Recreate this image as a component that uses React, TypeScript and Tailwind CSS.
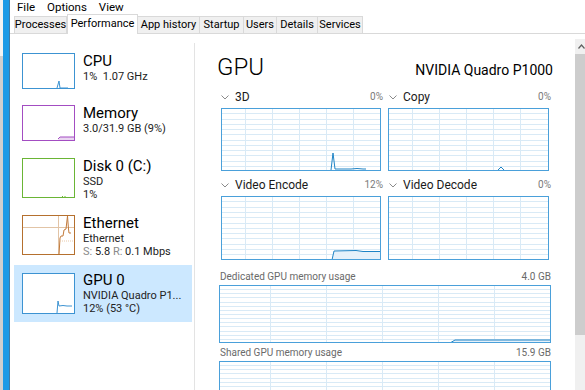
import React from "react";

type ChartProps = {
  w: number;
  h: number;
  cols: number[];
  rowH: number;
  line?: string;
  fill?: string;
};

// big graphs on the right side
function Chart({ w, h, cols, rowH, line, fill }: ChartProps) {
  const rows: number[] = [];
  for (let y = rowH; y < h - 2; y += rowH) rows.push(Math.round(y) + 0.5);
  return (
    <svg width={w} height={h} className="block">
      <rect x={0} y={0} width={w} height={h} fill="#ffffff" />
      {rows.map((y) => (
        <line key={"r" + y} x1={0} x2={w} y1={y} y2={y} stroke="#d9eaf6" />
      ))}
      {cols.map((x) => (
        <line key={"c" + x} x1={x + 0.5} x2={x + 0.5} y1={0} y2={h} stroke="#d9eaf6" />
      ))}
      {fill && <path d={fill} fill="#e6f1fa" />}
      {line && <path d={line} fill="none" stroke="#1f84c6" strokeWidth={1} />}
      <rect x={0.5} y={0.5} width={w - 1} height={h - 1} fill="none" stroke="#4aa0da" />
    </svg>
  );
}

type ThumbProps = { h: number; color: string; children?: React.ReactNode };

function Thumb({ h, color, children }: ThumbProps) {
  return (
    <svg width={53} height={h} className="block shrink-0">
      <rect x={0} y={0} width={53} height={h} fill="#ffffff" />
      {children}
      <rect x={0.5} y={0.5} width={52} height={h - 1} fill="none" stroke={color} />
    </svg>
  );
}

const tabs = [
  { label: "Processes", w: "w-[53px]" },
  { label: "Performance", w: "w-[71px]", active: true },
  { label: "App history", w: "w-[63px]" },
  { label: "Startup", w: "w-[45px]" },
  { label: "Users", w: "w-[34px]" },
  { label: "Details", w: "w-[42px]" },
  { label: "Services", w: "w-[46px]" },
];

const smallCols = [24, 51, 78, 105, 132];
const bigCols = [51, 107, 163, 219, 275];

function Chevron() {
  return (
    <svg width={8} height={5} className="mr-[6px] shrink-0">
      <path d="M0.5 0.5 L4 4 L7.5 0.5" fill="none" stroke="#8a8a8a" strokeWidth={1} />
    </svg>
  );
}

function SmallLabel({ name, value }: { name: string; value: string }) {
  return (
    <div className="flex h-[14px] w-[162px] items-center whitespace-nowrap">
      <Chevron />
      <span className="text-[12px] leading-[14px] text-[#1a1a1a]">{name}</span>
      <span className="ml-auto text-[10px] leading-[14px] text-[#7a7a7a]">{value}</span>
    </div>
  );
}

function WideLabel({ name, value }: { name: string; value: string }) {
  return (
    <div className="flex h-[14px] w-[332px] items-center whitespace-nowrap pl-[1px] text-[10px] leading-[14px] text-[#6a6a6a]">
      <span>{name}</span>
      <span className="ml-auto">{value}</span>
    </div>
  );
}

export default function App() {
  return (
    <div className="flex h-[390px] w-[585px] overflow-hidden bg-white font-['Roboto','Noto_Sans',sans-serif] text-black">
      {/* desktop edge behind the window */}
      <div className="flex w-[3px] flex-col">
        <div className="h-[56px] bg-[#f3f3f3]" />
        <div className="flex-1 bg-[#cfcfcf]" />
      </div>
      <div className="w-[6px] bg-[#1c9ae6]" />
      <div className="w-px bg-[#3d7aa6]" />

      {/* task manager window */}
      <div className="flex flex-1 flex-col">
        <div className="flex h-[14px] items-center gap-[12px] whitespace-nowrap pl-[7px] pt-[1px] text-[11.5px] leading-[13px]">
          <span>File</span>
          <span>Options</span>
          <span>View</span>
        </div>

        <div className="flex h-[22px] items-end border-b border-[#d9d9d9] pl-[4px]">
          {tabs.map((t) =>
            t.active ? (
              <div
                key={t.label}
                className={`${t.w} -mb-px flex h-[20px] shrink-0 items-center justify-center whitespace-nowrap border border-b-0 border-[#d9d9d9] bg-white pb-[1px] text-[11px] leading-[14px]`}
              >
                {t.label}
              </div>
            ) : (
              <div
                key={t.label}
                className={`${t.w} -mb-px -ml-px flex h-[18px] shrink-0 items-center justify-center whitespace-nowrap border border-[#d9d9d9] bg-[#f0f0f0] text-[11px] leading-[14px] first:ml-0`}
              >
                {t.label}
              </div>
            )
          )}
        </div>

        <div className="flex flex-1">
          {/* left list */}
          <div className="flex w-[184px] flex-col whitespace-nowrap pl-[4px] pt-[11px]">
            <div className="flex w-[178px] gap-[8px] p-[8px]">
              <Thumb h={36} color="#3c93d2">
                <path d="M35 35 L37 28 L38 35 L46 35" fill="none" stroke="#3c93d2" />
              </Thumb>
              <div className="-mt-[1px] flex h-[36px] flex-col">
                <span className="text-[15px] leading-[18px]">CPU</span>
                <span className="text-[11px] leading-[13px] text-[#222]">1%&nbsp; 1.07 GHz</span>
              </div>
            </div>
            <div className="flex w-[178px] gap-[8px] p-[8px]">
              <Thumb h={36} color="#a34dc2">
                <path d="M36 35 L38 32 L53 32 L53 36 L36 36 Z" fill="#ead7f1" />
                <path d="M36 34 L38 32 L52 32" fill="none" stroke="#a34dc2" />
              </Thumb>
              <div className="-mt-[1px] flex h-[36px] flex-col">
                <span className="text-[15px] leading-[18px]">Memory</span>
                <span className="text-[11px] leading-[13px] text-[#222]">3.0/31.9 GB (9%)</span>
              </div>
            </div>
            <div className="mt-px flex w-[178px] gap-[8px] p-[8px]">
              <Thumb h={40} color="#6ab535">
                <path d="M40 38.5 L41 38.5 M42.5 38.5 L43.5 38.5" fill="none" stroke="#6ab535" />
              </Thumb>
              <div className="-mt-[1px] flex h-[40px] flex-col">
                <span className="text-[15px] leading-[18px]">Disk 0 (C:)</span>
                <span className="text-[11px] leading-[13px] text-[#222]">SSD</span>
                <span className="text-[11px] leading-[13px] text-[#222]">1%</span>
              </div>
            </div>
            <div className="mt-px flex w-[178px] gap-[8px] p-[8px]">
              <Thumb h={40} color="#b5702e">
                <path d="M0 12.5 L53 12.5 M36.5 0 L36.5 40" fill="none" stroke="#e2c4a6" />
                <path
                  d="M37 40 L38 23 L39 21 L41 21 L42 15 L44 14 L45.5 1 L46.5 14 L47 18 L49 18"
                  fill="none"
                  stroke="#c27a3b"
                />
                <path d="M38 26 L52 26" fill="none" stroke="#e8c9aa" strokeDasharray="1 1" />
              </Thumb>
              <div className="-mt-[1px] flex h-[40px] flex-col">
                <span className="text-[15px] leading-[18px]">Ethernet</span>
                <span className="text-[11px] leading-[13px] text-[#222]">Ethernet</span>
                <span className="text-[11px] leading-[13px] text-[#222]">
                  <span className="text-[#8a8a8a]">S:</span> 5.8 <span className="text-[#8a8a8a]">R:</span> 0.1 Mbps
                </span>
              </div>
            </div>
            <div className="mt-[2px] flex w-[178px] gap-[8px] bg-[#cce8ff] px-[8px] py-[8px]">
              <Thumb h={41} color="#3c93d2">
                <path d="M35 40 L36 28 L37 33 L41 32.5 L45 33 L50 33" fill="none" stroke="#3c93d2" />
              </Thumb>
              <div className="-mt-[2px] flex h-[41px] flex-col">
                <span className="text-[15px] leading-[18px]">GPU 0</span>
                <span className="text-[11px] leading-[13px] text-[#222]">NVIDIA Quadro P1...</span>
                <span className="text-[11px] leading-[13px] text-[#222]">12% (53 °C)</span>
              </div>
            </div>
          </div>

          <div className="mt-[9px] w-px bg-[#e3e3e3]" />

          {/* right detail panel */}
          <div className="flex flex-1 flex-col pl-[24px] pt-[18px]">
            <div className="flex w-[334px] items-baseline justify-between whitespace-nowrap">
              <span className="-ml-[2px] text-[24px] font-light leading-[30px]">GPU</span>
              <span className="text-[14px] leading-[18px]">NVIDIA Quadro P1000</span>
            </div>

            <div className="mt-[8px] flex gap-[6px] pl-[2px]">
              <SmallLabel name="3D" value="0%" />
              <SmallLabel name="Copy" value="0%" />
            </div>
            <div className="mt-[4px] flex gap-[7px] pl-[2px]">
              <Chart
                w={160}
                h={63}
                cols={smallCols}
                rowH={5.25}
                line="M110 62 L112 45 L114 61 L130 61 L136 60.5 L142 61 L145 61"
              />
              <Chart w={161} h={63} cols={smallCols} rowH={5.25} line="M110 62 L113 59 L116 62" />
            </div>

            <div className="mt-[7px] flex gap-[6px] pl-[2px]">
              <SmallLabel name="Video Encode" value="12%" />
              <SmallLabel name="Video Decode" value="0%" />
            </div>
            <div className="mt-[4px] flex gap-[7px] pl-[2px]">
              <Chart
                w={160}
                h={64}
                cols={smallCols}
                rowH={5.3}
                fill="M111 64 L113 55 L135 54.5 L142 55.5 L160 55.5 L160 64 Z"
                line="M111 64 L113 55 L135 54.5 L142 55.5 L160 55.5"
              />
              <Chart w={161} h={64} cols={smallCols} rowH={5.3} />
            </div>

            <div className="mt-[10px]">
              <WideLabel name="Dedicated GPU memory usage" value="4.0 GB" />
            </div>
            <div className="mt-px">
              <Chart
                w={332}
                h={58}
                cols={bigCols}
                rowH={4.15}
                fill="M231 58 L236 55 L332 55 L332 58 Z"
                line="M231 58 L236 55 L332 55"
              />
            </div>

            <div className="mt-[3px]">
              <WideLabel name="Shared GPU memory usage" value="15.9 GB" />
            </div>
            <div className="mt-px">
              <Chart w={332} h={60} cols={bigCols} rowH={4.15} />
            </div>
          </div>

          {/* scrollbar */}
          <div className="mt-[5px] flex w-[10px] flex-col">
            <div className="flex h-[15px] items-center justify-center bg-[#f0f0f0] pl-[3px]">
              <svg width={7} height={5}>
                <path d="M0.5 4.5 L3.5 1 L6.5 4.5" fill="none" stroke="#606060" strokeWidth={1.2} />
              </svg>
            </div>
            <div className="h-[281px] bg-[#cdcdcd]" />
            <div className="flex-1 bg-[#f0f0f0]" />
          </div>
        </div>
      </div>
    </div>
  );
}
